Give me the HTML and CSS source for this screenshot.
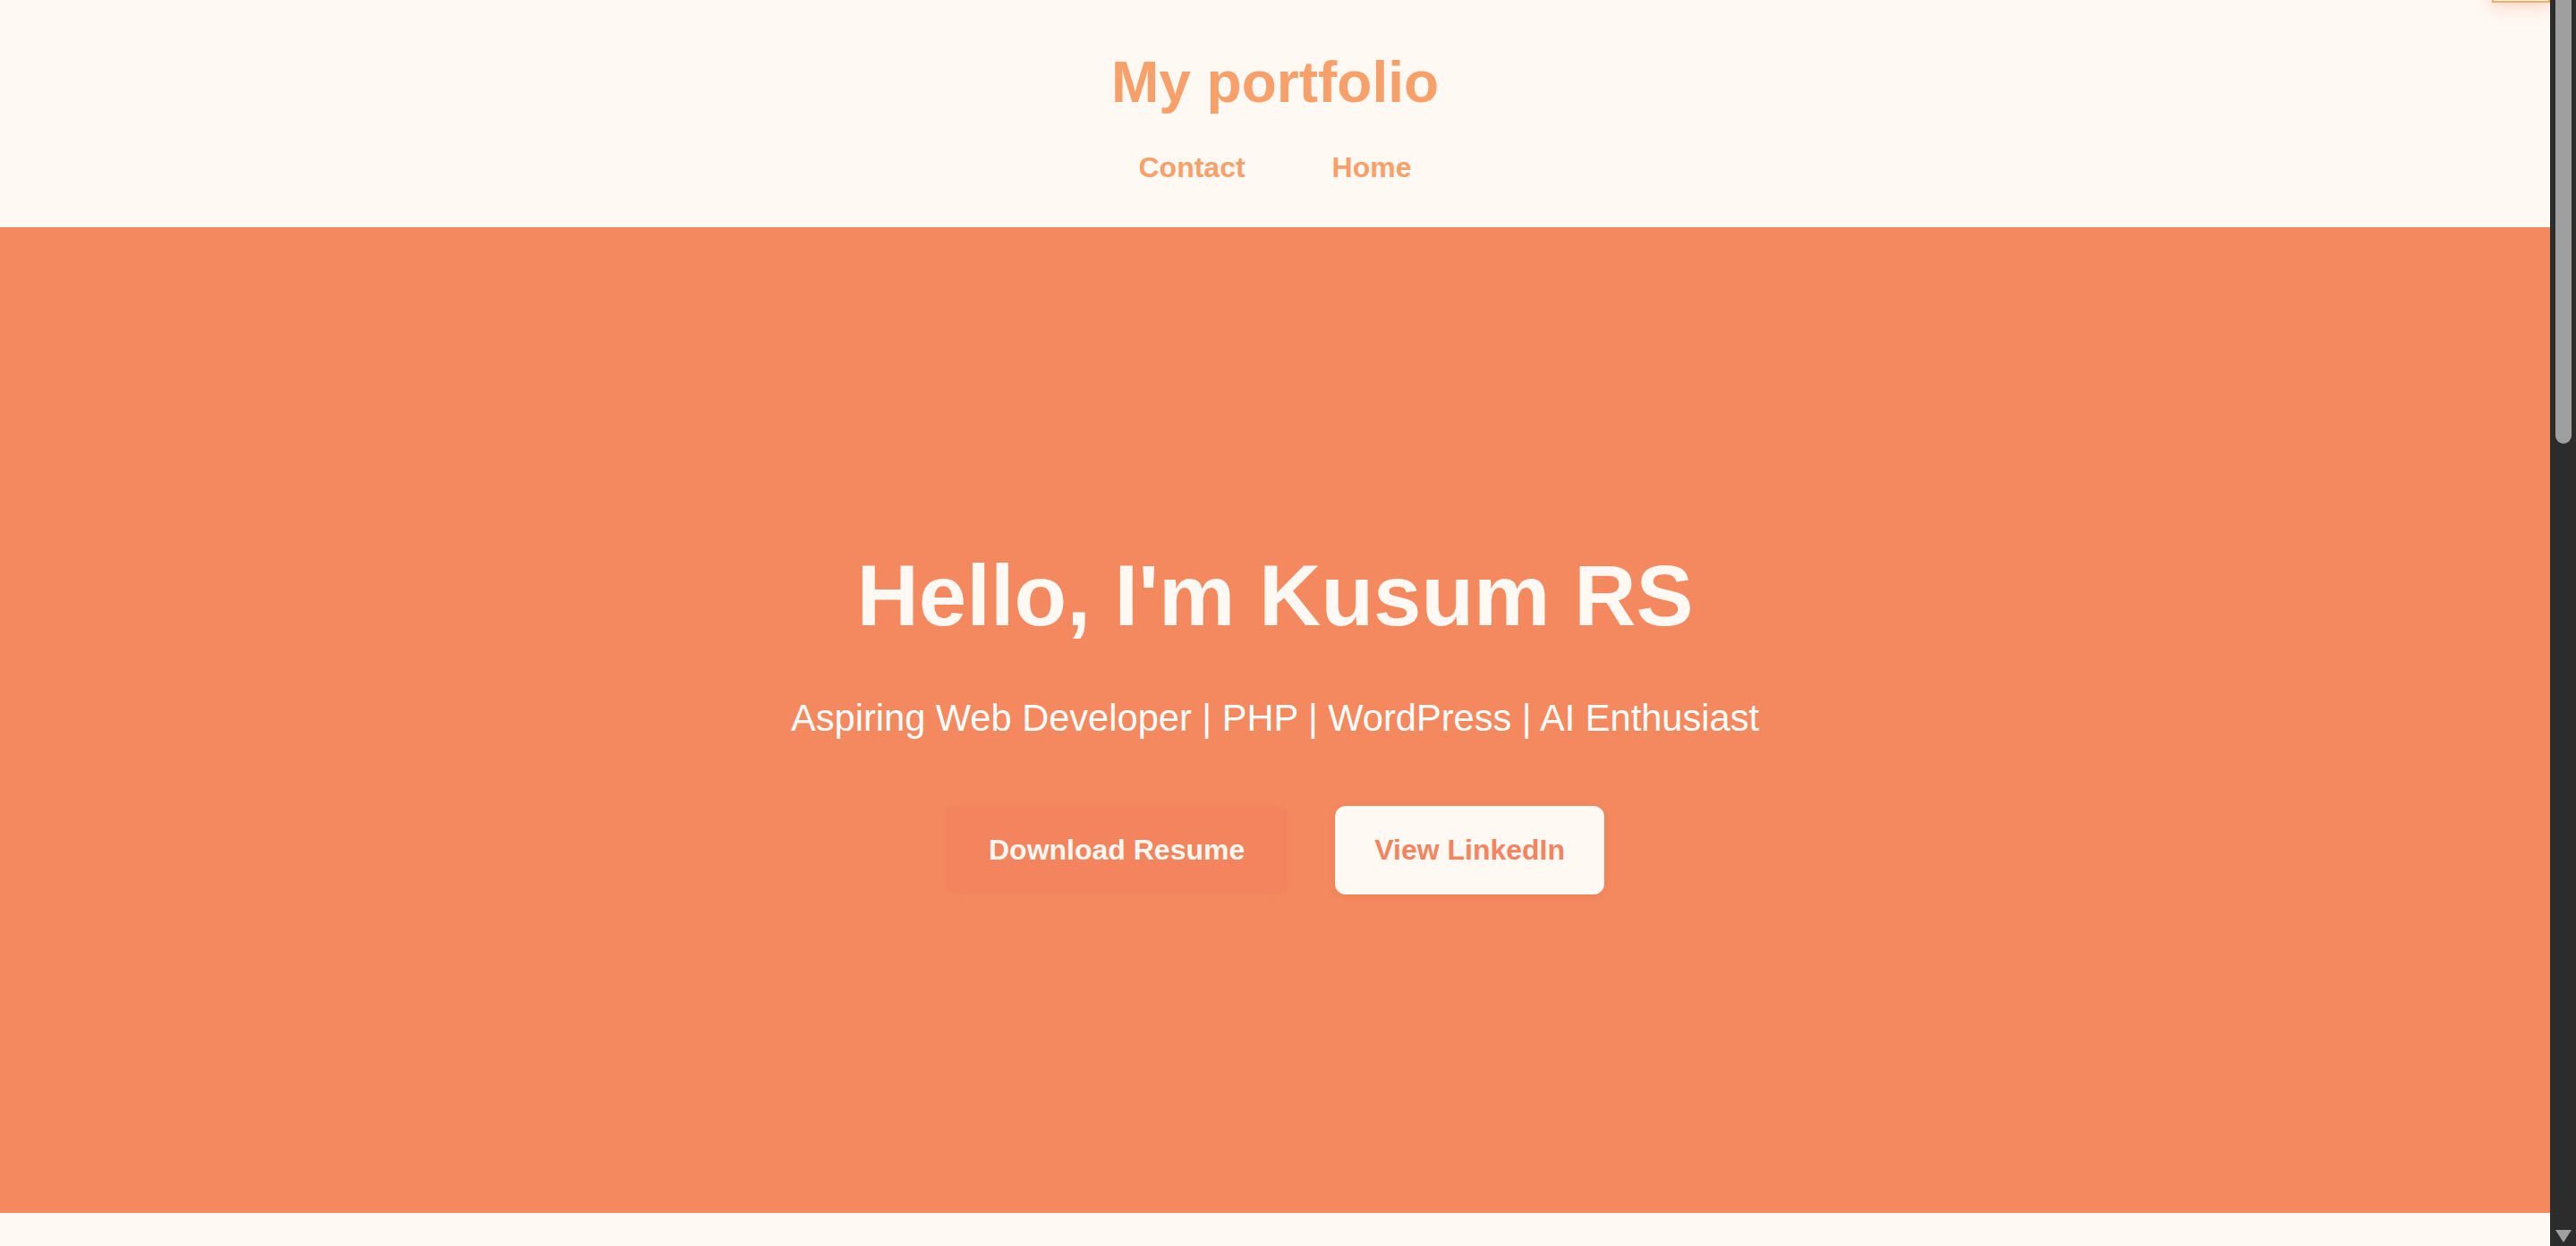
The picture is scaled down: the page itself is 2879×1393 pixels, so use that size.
FILE: index.html
```html
<!DOCTYPE html>
<html lang="en">
<head>
<meta charset="utf-8">
<title>My portfolio</title>
<link rel="stylesheet" href="styles.css">
</head>
<body>
  <div class="page">
    <button class="theme-toggle" aria-label="Toggle theme"></button>
    <header class="site-header">
      <h1 class="brand">My portfolio</h1>
      <nav class="nav">
        <a class="nav-link" href="#contact">Contact</a>
        <a class="nav-link" href="#home">Home</a>
      </nav>
    </header>
    <section class="hero" id="home">
      <h2 class="hero-title">Hello, I'm Kusum RS</h2>
      <p class="hero-subtitle">Aspiring Web Developer | PHP | WordPress | AI Enthusiast</p>
      <div class="hero-actions">
        <a class="btn btn-primary" href="#">Download Resume</a>
        <a class="btn btn-light" href="#">View LinkedIn</a>
      </div>
    </section>
    <section class="section" id="about"></section>
  </div>
  <div class="scrollbar" aria-hidden="true">
    <div class="scrollbar-thumb"></div>
    <div class="scrollbar-arrow"></div>
  </div>
</body>
</html>
```

FILE: styles.css
```css
html {
  background: #fff8f3;
}

body {
  margin: 0;
  padding-right: 29px;
  font-family: "Liberation Sans", Arial, sans-serif;
  background: #fff8f3;
}

.page {
  position: relative;
}

.theme-toggle {
  position: absolute;
  top: -40px;
  right: 0;
  width: 65px;
  height: 43px;
  border: 2px solid #f8ab5e;
  background: #fff8f3;
  box-shadow: 0 4px 18px rgba(244, 137, 96, 0.35);
  padding: 0;
}

.site-header {
  background: #fff8f3;
  padding: 55px 0 48px;
  text-align: center;
}

.brand {
  margin: 0 0 40px;
  font-size: 64px;
  font-weight: 700;
  line-height: normal;
  color: #f8a06a;
}

.nav {
  display: flex;
  justify-content: center;
  gap: 97px;
}

.nav-link {
  font-size: 32px;
  font-weight: 700;
  color: #f8a06a;
  text-decoration: none;
  line-height: normal;
}

.hero {
  height: 1102px;
  background: #f4895f;
  display: flex;
  flex-direction: column;
  align-items: center;
  justify-content: center;
  text-align: center;
  color: #fff8f3;
}

.hero-title {
  margin: 0 0 59px;
  font-size: 96px;
  font-weight: 700;
  line-height: normal;
}

.hero-subtitle {
  margin: 0 0 75px;
  font-size: 41.6px;
  line-height: 46px;
  color: #ffffff;
}

.hero-actions {
  display: flex;
  gap: 53px;
}

.btn {
  display: block;
  font-size: 32px;
  font-weight: 700;
  line-height: 37px;
  padding: 31px 48px;
  border-radius: 12px;
  text-decoration: none;
}

.btn-primary {
  background: #f3845d;
  color: #fff8f3;
  box-shadow: 0 0 12px rgba(240, 120, 80, 0.15);
}

.btn-light {
  background: #fff8f3;
  color: #f4845e;
  padding: 31px 44px;
  box-shadow: 0 2px 8px rgba(220, 100, 60, 0.25);
}

.section {
  height: 2475px;
  background: #fff8f3;
}

.scrollbar {
  position: fixed;
  top: 0;
  right: 0;
  bottom: 0;
  width: 29px;
  background: #2c2c2c;
  display: flex;
  flex-direction: column;
  align-items: center;
}

.scrollbar-thumb {
  width: 18px;
  height: 496px;
  margin-left: 1px;
  background: #9f9f9f;
  border-radius: 0 0 9px 9px;
}

.scrollbar-arrow {
  margin-top: auto;
  margin-bottom: 4px;
  margin-left: 1px;
  width: 0;
  height: 0;
  border-left: 9px solid transparent;
  border-right: 9px solid transparent;
  border-top: 14px solid #a0a0a0;
}
```
